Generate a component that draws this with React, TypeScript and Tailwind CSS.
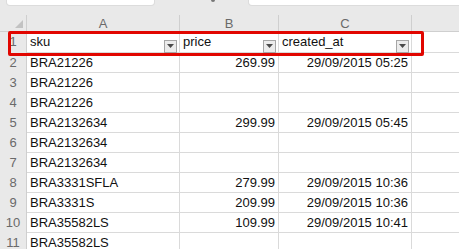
import React from 'react';

type Row = { n: number; sku: string; price?: string; created?: string };

const rows: Row[] = [
  { n: 2, sku: 'BRA21226', price: '269.99', created: '29/09/2015 05:25' },
  { n: 3, sku: 'BRA21226' },
  { n: 4, sku: 'BRA21226' },
  { n: 5, sku: 'BRA2132634', price: '299.99', created: '29/09/2015 05:45' },
  { n: 6, sku: 'BRA2132634' },
  { n: 7, sku: 'BRA2132634' },
  { n: 8, sku: 'BRA3331SFLA', price: '279.99', created: '29/09/2015 10:36' },
  { n: 9, sku: 'BRA3331S', price: '209.99', created: '29/09/2015 10:36' },
  { n: 10, sku: 'BRA35582LS', price: '109.99', created: '29/09/2015 10:41' },
  { n: 11, sku: 'BRA35582LS' },
];

const cols = 'grid grid-cols-[27px_153px_99px_133px_1fr]';

function FilterButton() {
  return (
    <span className="absolute right-[2px] bottom-[1px] flex h-[13px] w-[13px] items-center justify-center border border-[#a6a6a6] bg-[#ececec]">
      <svg width="7" height="4" viewBox="0 0 7 4">
        <path d="M0 0h7L3.5 4z" fill="#4a4a4a" />
      </svg>
    </span>
  );
}

export default function App() {
  return (
    <div
      className="relative h-[249px] w-[459px] overflow-hidden bg-white text-[13px] text-[#111]"
      style={{ fontFamily: '"Liberation Sans", Arial, sans-serif' }}
    >
      {/* Formula bar strip */}
      <div className="flex h-[15px] items-start bg-[#e9e9e9] pl-[7px]">
        <div className="h-[5px] w-[147px] rounded-b-[3px] bg-white shadow-[0_0_0_1px_#dcdcdc]" />
        <div className="ml-[57px] h-[2px] w-[4px] rounded-b-full bg-[#777]" />
        <div className="ml-[34px] h-[5px] flex-1 rounded-bl-[3px] bg-white shadow-[0_0_0_1px_#dcdcdc]" />
      </div>

      {/* Column headers */}
      <div className={`${cols} h-[17px] bg-[#e9e9e9] text-[#6a6a6a] border-b border-[#cfcfcf]`}>
        <div className="relative border-r border-[#cfcfcf]">
          <svg className="absolute left-[15px] top-[5px]" width="8" height="8" viewBox="0 0 8 8">
            <path d="M8 0V8H0z" fill="#c2c2c2" />
          </svg>
        </div>
        <div className="flex items-center justify-center border-r border-[#cfcfcf] leading-none">A</div>
        <div className="flex items-center justify-center border-r border-[#cfcfcf] leading-none">B</div>
        <div className="flex items-center justify-center border-r border-[#cfcfcf] leading-none">C</div>
        <div />
      </div>

      {/* Header row */}
      <div className={`${cols} h-[21px] border-b border-[#dadada]`}>
        <div className="flex items-end justify-center bg-[#e9e9e9] pb-[2px] text-[#6a6a6a] border-r border-[#cfcfcf]">1</div>
        <div className="relative flex items-end pl-[3px] pb-[2px] border-r border-[#dadada]">
          sku
          <FilterButton />
        </div>
        <div className="relative flex items-end pl-[3px] pb-[2px] border-r border-[#dadada]">
          price
          <FilterButton />
        </div>
        <div className="relative flex items-end pl-[3px] pb-[2px] border-r border-[#dadada]">
          created_at
          <FilterButton />
        </div>
        <div />
      </div>

      {rows.map((r) => (
        <div key={r.n} className={`${cols} h-[20px] border-b border-[#dadada]`}>
          <div className="flex items-end justify-center bg-[#e9e9e9] pb-[2px] text-[#6a6a6a] border-r border-[#cfcfcf]">
            {r.n}
          </div>
          <div className="flex items-end pl-[3px] pb-[2px] border-r border-[#dadada]">{r.sku}</div>
          <div className="flex items-end justify-end pr-[3px] pb-[2px] border-r border-[#dadada]">{r.price}</div>
          <div className="flex items-end justify-end pr-[3px] pb-[2px] border-r border-[#dadada]">{r.created}</div>
          <div />
        </div>
      ))}

      {/* Red highlight around header row */}
      <div className="pointer-events-none absolute left-[8px] top-[31px] h-[25px] w-[416px] rounded-[2px] border-[3px] border-[#e10600]" />
    </div>
  );
}
